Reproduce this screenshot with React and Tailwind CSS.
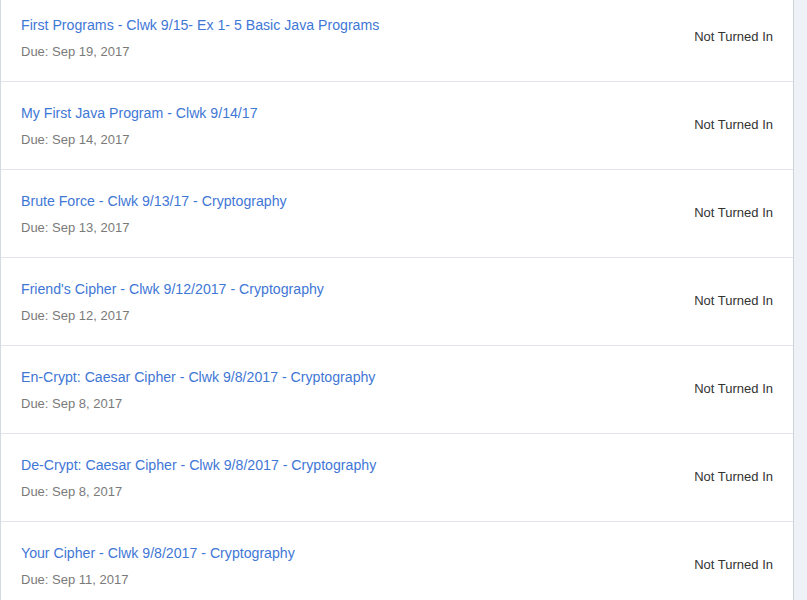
import React from 'react'

const assignments = [
  { title: 'First Programs - Clwk 9/15- Ex 1- 5 Basic Java Programs', due: 'Sep 19, 2017' },
  { title: 'My First Java Program - Clwk 9/14/17', due: 'Sep 14, 2017' },
  { title: 'Brute Force - Clwk 9/13/17 - Cryptography', due: 'Sep 13, 2017' },
  { title: "Friend's Cipher - Clwk 9/12/2017 - Cryptography", due: 'Sep 12, 2017' },
  { title: 'En-Crypt: Caesar Cipher - Clwk 9/8/2017 - Cryptography', due: 'Sep 8, 2017' },
  { title: 'De-Crypt: Caesar Cipher - Clwk 9/8/2017 - Cryptography', due: 'Sep 8, 2017' },
  { title: 'Your Cipher - Clwk 9/8/2017 - Cryptography', due: 'Sep 11, 2017' },
]

function App() {
  return (
    <div className="h-[600px] overflow-hidden bg-[#eef1f5] font-['Liberation_Sans',Arial,sans-serif]">
      <div className="w-[794px] -mt-[6px] bg-white border-l border-r border-l-[#d3dae3] border-r-[#cfd4da]">
        {assignments.map((a, i) => (
          <div
            key={i}
            className="flex justify-between h-[88px] px-[20px] border-b border-[#e2e5e9]"
          >
            <div className="flex flex-col pt-[21px]">
              <a className="text-[14.15px] leading-[20px] text-[#3f77d6] cursor-pointer">{a.title}</a>
              <span className="mt-[8px] text-[13px] leading-[18px] text-[#7a7a7a]">Due: {a.due}</span>
            </div>
            <span className="self-center -mt-[1px] text-[13px] leading-[18px] text-[#333]">Not Turned In</span>
          </div>
        ))}
      </div>
    </div>
  )
}

export default App
